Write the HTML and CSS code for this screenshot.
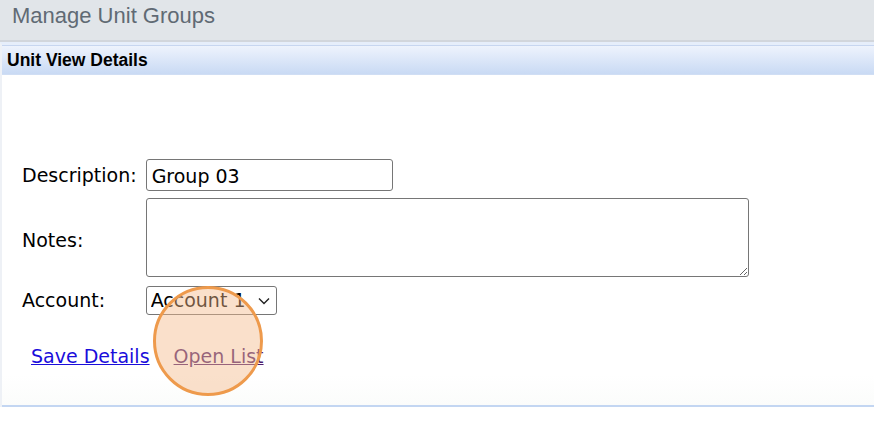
FILE: index.html
```html
<!DOCTYPE html>
<html lang="en">
<head>
  <meta charset="UTF-8">
  <title>Manage Unit Groups</title>
  <link rel="stylesheet" href="styles.css">
</head>
<body>
  <div class="page-head">
    <h1>Manage Unit Groups</h1>
  </div>

  <div class="panel">
    <div class="panel-title">Unit View Details</div>

    <div class="panel-body">
      <table class="form">
        <tr>
          <td class="label">Description:</td>
          <td><input type="text" class="desc" value="Group 03"></td>
        </tr>
        <tr>
          <td class="label">Notes:</td>
          <td class="top"><textarea class="notes"></textarea></td>
        </tr>
        <tr>
          <td class="label">Account:</td>
          <td>
            <span class="select-wrap">
              <select class="account">
                <option>Account 1</option>
              </select>
              <svg class="chevron" width="12" height="8" viewBox="0 0 12 8">
                <path d="M1 1.5 L6 6.5 L11 1.5" fill="none" stroke="#222" stroke-width="1.4"/>
              </svg>
            </span>
          </td>
        </tr>
      </table>

      <div class="actions">
        <a href="#" class="save">Save Details</a>
        <span class="open-wrap">
          <a href="#" class="open">Open List</a>
          <span class="click-mark"></span>
        </span>
      </div>
    </div>
  </div>
</body>
</html>
```

FILE: styles.css
```css
body {
  margin: 0;
  background: #fff;
  font-family: "DejaVu Sans", Verdana, sans-serif;
  overflow: hidden;
}
.page-head {
  background: #e1e5e9;
  height: 40px;
  border-bottom: 2px solid #d2d6dc;
}
.page-head h1 {
  margin: 0;
  padding: 2px 0 0 12px;
  font-family: "Liberation Sans", Arial, sans-serif;
  font-weight: normal;
  font-size: 22px;
  line-height: 28px;
  color: #606a74;
}
.panel {
  border-top: 3px solid #e6eefb;
  border-left: 2px solid #eef1f6;
}
.panel-title {
  background: linear-gradient(#eef3fd, #c9daf4);
  border-top: 1px solid #c7d6f0;
  border-bottom: 1px solid #d0def4;
  height: 28px;
  line-height: 28px;
  padding-left: 5px;
  font-family: "Liberation Sans", Arial, sans-serif;
  font-weight: bold;
  font-size: 17.5px;
  color: #000;
}
.panel-body {
  padding: 80px 0 0 20px;
  height: 250px;
  border-bottom: 2px solid #c3d6f2;
  background: linear-gradient(#fff 300px, #fbfcfb);
}
.form {
  border-collapse: collapse;
}
.form td {
  padding: 0;
  font-size: 19px;
  color: #000;
}
.form td.label {
  padding-right: 9px;
}
.form td.top {
  vertical-align: top;
  padding-top: 4px;
}
.form tr:first-child td { height: 39px; }
.form tr:nth-child(2) td { height: 87px; }
.form tr:nth-child(3) td { height: 30px; }
input.desc {
  display: block;
  width: 247px;
  height: 32px;
  box-sizing: border-box;
  padding: 2px 5px 0;
  font-family: inherit;
  font-size: 19px;
  border: 1px solid #767676;
  border-radius: 3px;
  color: #000;
}
textarea.notes {
  display: block;
  width: 603px;
  height: 79px;
  box-sizing: border-box;
  border: 1px solid #767676;
  border-radius: 3px;
  margin: 0;
}
.select-wrap {
  position: relative;
  display: inline-block;
  vertical-align: middle;
}
select.account {
  display: block;
  width: 131px;
  height: 29px;
  appearance: none;
  -webkit-appearance: none;
  font-family: inherit;
  font-size: 19px;
  border: 1px solid #767676;
  border-radius: 3px;
  background: #fff;
  color: #000;
  padding: 0 4px;
}
.chevron {
  position: absolute;
  right: 7px;
  top: 11px;
  pointer-events: none;
}
.actions {
  margin: 30px 0 0 9px;
  display: flex;
  gap: 24px;
  font-size: 19px;
}
.actions a.save { color: #1a0ddb; }
.actions a.open { color: #4e1c6e; }
.open-wrap {
  position: relative;
}
.click-mark {
  position: absolute;
  left: -21px;
  top: -59px;
  width: 104px;
  height: 104px;
  border: 3px solid #ee9a4c;
  border-radius: 50%;
  background: rgba(243, 186, 140, 0.45);
}
```
